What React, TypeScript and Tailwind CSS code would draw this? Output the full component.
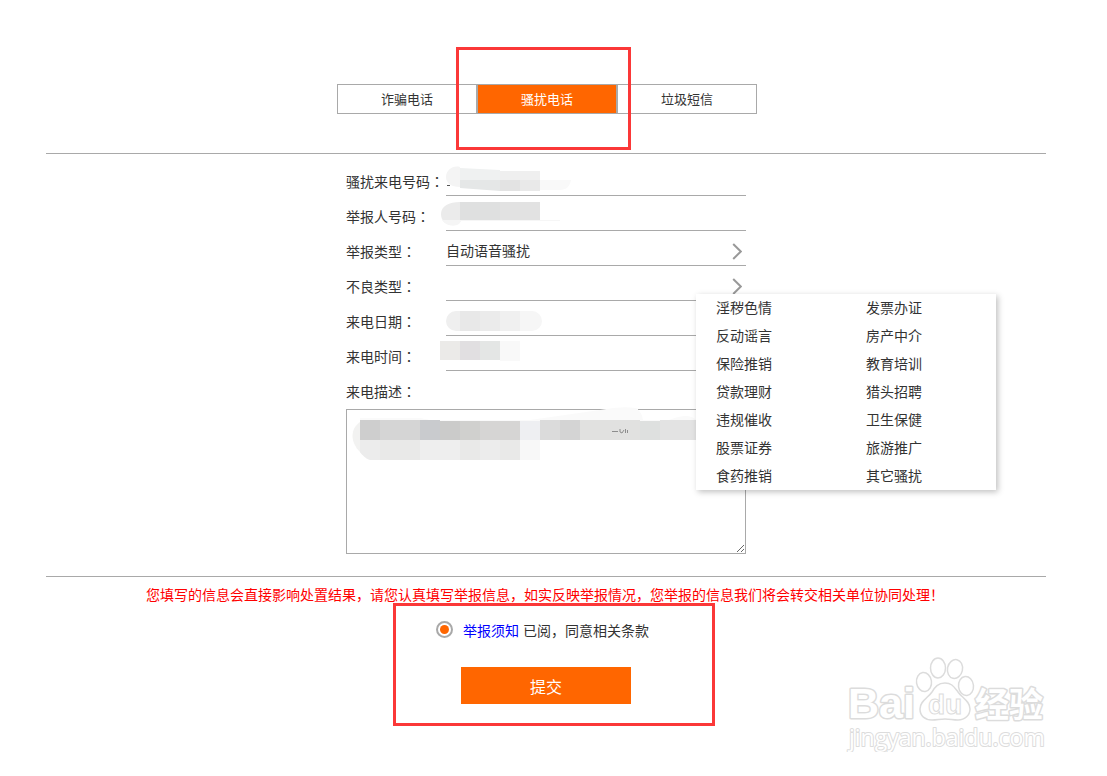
import { useState } from "react";
import clsx from "clsx";

const tabs = ["诈骗电话", "骚扰电话", "垃圾短信"];

const badTypes = [
  "淫秽色情", "发票办证",
  "反动谣言", "房产中介",
  "保险推销", "教育培训",
  "贷款理财", "猎头招聘",
  "违规催收", "卫生保健",
  "股票证券", "旅游推广",
  "食药推销", "其它骚扰",
];

function Label({ id, text }: { id: string; text: string }) {
  return (
    <label htmlFor={id} className="w-[100px] shrink-0 pt-1">
      {text}
      <span lang="ja" className="font-['Noto_Sans_CJK_JP',sans-serif]">：</span>
    </label>
  );
}

function TextRow({ id, label }: { id: string; label: string }) {
  return (
    <div className="flex h-[35px] items-center">
      <Label id={id} text={label} />
      <input
        id={id}
        type="text"
        className="h-full min-w-0 flex-1 border-b border-[#a9a9a9] outline-none"
      />
    </div>
  );
}

type SelectRowProps = {
  id: string;
  label: string;
  value: string;
  options: string[];
  onChange: (v: string) => void;
  children?: React.ReactNode;
};

function SelectRow({ id, label, value, options, onChange, children }: SelectRowProps) {
  return (
    <div className="flex h-[35px] items-center">
      <Label id={id} text={label} />
      <div className="relative h-full flex-1">
        <select
          id={id}
          value={value}
          onChange={(e) => onChange(e.target.value)}
          className="h-full w-full appearance-none border-b border-[#a9a9a9] bg-transparent pt-1 outline-none"
        >
          {options.map((o) => (
            <option key={o} value={o}>{o}</option>
          ))}
        </select>
        <svg
          className="pointer-events-none absolute top-3 right-1 h-[18px] w-[10px]"
          viewBox="0 0 10 18"
          fill="none"
          stroke="#999"
          strokeWidth="2"
          aria-hidden="true"
        >
          <path d="M1.200 1 8.800 8.500 1.200 16" />
        </svg>
        {children}
      </div>
    </div>
  );
}

// blurred-out private values
function Mosaic() {
  return (
    <svg
      className="pointer-events-none absolute top-0 -left-2 h-[300px] w-[360px]"
      viewBox="338 161 360 300"
      aria-hidden="true"
    >
      <path d="M447 185.500h3" stroke="#555" />
      <path d="M460 167c-7-2-14 3-14 10 0 6 5 10 14 10z" fill="#f4f4f4" />
      <path d="M460 168l40 2v10h-40z" fill="#eff1f1" />
      <path d="M460 180h40v11l-40-3z" fill="#e5e7e7" />
      <path d="M500 171h40v9h-40z" fill="#efefef" />
      <path d="M500 180h40v11h-40z" fill="#e3e3e3" />
      <path d="M520 180h20v11h-20z" fill="#e9e9e9" />
      <path d="M540 180h31c-1 6-4 10-12 10h-19z" fill="#f9f9f9" />

      <path d="M460 202c-11 0-19 4-19 12 0 7 5 11 11 11s8-3 8-5z" fill="#ebebeb" />
      <path d="M442 220h20l-3 4c-5 3-13 2-17-4z" fill="#f5f5f5" />
      <path d="M460 202h40v18h-40z" fill="#dfe0e0" />
      <path d="M500 202h40v18h-40z" fill="#e2e2e2" />
      <path d="M460 220h100v1h-100z" fill="#f6f6f6" />

      <path d="M460 311h-4a10 10 0 0 0 0 20h4z" fill="#efefef" />
      <path d="M460 311h20v20h-20z" fill="#e8e8e8" />
      <path d="M480 311h20v20h-20z" fill="#ebebeb" />
      <path d="M500 311h20v20h-20z" fill="#f0f0f0" />
      <path d="M520 311h12a10 10 0 0 1 0 20h-12z" fill="#f6f6f6" />

      <path d="M440 341h20v19h-20z" fill="#ebeae8" />
      <path d="M460 341h20v19h-20z" fill="#e1dfe1" />
      <path d="M480 341h20v19h-20z" fill="#e4e6e5" />
      <path d="M500 341h20v20h-20z" fill="#f9f9f9" />

      <path d="M360 418h60l10 2h100l70-10q20-4 36-2 6 4 7 12h26q20-8 27 0v6H360z" fill="#fafafa" />
      <path d="M360 422c-10 7-10 20 0 30l8 7h12v-37z" fill="#f2f2f1" />
      <path d="M360 440h20v20h-10c-4-1-8-5-10-8z" fill="#ececec" />
      <path d="M380 440h140v20H380z" fill="#e9e9e8" />
      <path d="M420 440h40v20h-40z" fill="#eeeeee" />
      <path d="M480 440h20v20h-20z" fill="#ececec" />
      <path d="M520 440h20v20h-20z" fill="#f8f8f8" />
      <path d="M360 420h20v20h-20z" fill="#cecece" />
      <path d="M380 420h40v20h-40z" fill="#d5d5d5" />
      <path d="M420 420h20v20h-20z" fill="#c9cbce" />
      <path d="M440 421h20v19h-20z" fill="#cbcbca" />
      <path d="M460 421h20v19h-20z" fill="#d0d0ce" />
      <path d="M480 421h40v19h-40z" fill="#d6d5d4" />
      <path d="M520 421h20v19h-20z" fill="#eeeff2" />
      <path d="M540 420h20v20h-20z" fill="#dbdbdb" />
      <path d="M560 420h20v20h-20z" fill="#d4d4d4" />
      <path d="M580 420h60v20h-60z" fill="#e1e1e0" />
      <path d="M640 421h20v19h-20z" fill="#dee0df" />
      <path d="M660 420h38v20h-38z" fill="#e3e3e3" />
      <path d="M612 431.500h6M620 429v3l2 1 2-3M625.500 429v4M627.500 430v3" stroke="#777" fill="none" strokeWidth="0.8" />
      <path d="M618 409.500h20" stroke="#fafafa" strokeWidth="2" />
    </svg>
  );
}

function Watermark() {
  return (
    <svg
      className="pointer-events-none absolute top-[77px] right-0 h-[100px] w-[200px]"
      viewBox="846 654 200 100"
      fill="#fff"
      stroke="#dcdcdc"
      strokeWidth="1.5"
      aria-hidden="true"
    >
      <g strokeLinejoin="round" paintOrder="stroke">
        <text x="848" y="718" fontSize="43" fontWeight="700" strokeWidth="3" className="font-['Liberation_Sans',sans-serif]">Bai</text>
        <text x="975" y="717" fontSize="34" fontWeight="700" strokeWidth="3" className="font-['Noto_Sans_CJK_SC',sans-serif]">经验</text>
        <text x="849" y="746" fontSize="23" fontWeight="400" strokeWidth="2" className="font-['Open_Sans',sans-serif]">jingyan.baidu.com</text>
      </g>
      <ellipse cx="924" cy="682" rx="7.500" ry="9.500" transform="rotate(-8 924 682)" />
      <ellipse cx="938" cy="668" rx="7.500" ry="10" />
      <ellipse cx="955" cy="669" rx="7.500" ry="9.500" transform="rotate(12 955 669)" />
      <ellipse cx="966" cy="686" rx="7.500" ry="9.500" transform="rotate(-6 966 686)" />
      <path d="M945 683c-7 0-10 4-13 9-4 6-12 9-12 17 0 7 5 11 12 11 5 0 8-1 13-1s8 1 13 1c7 0 12-5 12-11 0-8-8-11-12-17-4-5-6-9-13-9z" />
      <text x="928" y="714" fontSize="28" fontWeight="700" strokeWidth="1" className="font-['Liberation_Sans',sans-serif]">du</text>
    </svg>
  );
}

export default function App() {
  const [tab, setTab] = useState(1);
  const [reportType, setReportType] = useState("自动语音骚扰");
  const [badType, setBadType] = useState("");
  const [agreed, setAgreed] = useState(true);

  return (
    <div className="bg-white pr-[61px] pb-12 pl-[46px] font-['Noto_Sans_CJK_SC',sans-serif] text-sm text-[#333]" lang="zh-CN">
      <main className="mx-auto max-w-[1000px]">
        <div className="flex justify-center border-b border-[#a9a9a9] pt-[84px] pb-[39px] pl-0.5">
          <nav className="relative flex w-[420px]">
            {tabs.map((t, i) => (
              <button
                key={t}
                type="button"
                onClick={() => setTab(i)}
                className={clsx(
                  "h-[30px] flex-1 border border-[#a9a9a9] text-[13px]",
                  tab === i && "bg-[#ff6600] text-white"
                )}
              >
                {t}
              </button>
            ))}
            <div className="pointer-events-none absolute -top-[37px] left-[119px] h-[103px] w-[175px] border-3 border-[#fb3838]" />
          </nav>
        </div>

        <form onSubmit={(e) => e.preventDefault()}>
          <div className="border-b border-[#a9a9a9] pt-[7px] pb-[22px]">
            <div className="relative mx-auto max-w-[400px]">
              <TextRow id="caller" label="骚扰来电号码" />
              <TextRow id="reporter" label="举报人号码" />
              <SelectRow
                id="report-type"
                label="举报类型"
                value={reportType}
                options={["自动语音骚扰", "人工骚扰"]}
                onChange={setReportType}
              />
              <SelectRow
                id="bad-type"
                label="不良类型"
                value={badType}
                options={["", ...badTypes]}
                onChange={setBadType}
              >
                <ul className="absolute top-7 left-[250px] z-10 grid w-[300px] grid-cols-2 bg-white shadow-[2px_2px_6px_rgba(0,0,0,0.25)]">
                  {badTypes.map((t) => (
                    <li key={t} className="h-7 pl-5">
                      <button type="button" className="h-full pb-0.5" onClick={() => setBadType(t)}>
                        {t}
                      </button>
                    </li>
                  ))}
                </ul>
              </SelectRow>
              <TextRow id="date" label="来电日期" />
              <TextRow id="time" label="来电时间" />
              <div className="flex h-[35px] items-center">
                <Label id="desc" text="来电描述" />
              </div>
              <textarea
                id="desc"
                className="mt-[3px] block h-[145px] w-full border border-[#a9a9a9] p-2 outline-none"
              />
              <Mosaic />
            </div>
          </div>

          <div className="relative">
            <p className="px-[100px] leading-[35px] whitespace-nowrap text-[#ff0000]">
              您填写的信息会直接影响处置结果，请您认真填写举报信息，如实反映举报情况，您举报的信息我们将会转交相关单位协同处理！
            </p>
            <div className="relative mx-auto max-w-[400px]">
              <div className="flex h-[35px] items-center pl-[90px]">
                <input
                  id="agree"
                  type="radio"
                  checked={agreed}
                  onChange={() => setAgreed(true)}
                  className="mr-[10px] size-[17px] appearance-none rounded-full border-2 border-[#a9a9a9] bg-clip-content p-[2px] checked:bg-[#ff6600]"
                />
                <a href="#notice" className="mr-1 text-[#0000ff]">举报须知</a>
                <label htmlFor="agree">已阅，同意相关条款</label>
              </div>
              <button type="submit" className="mx-auto mt-5 block h-[37px] w-[170px] bg-[#ff6600] text-base text-white">
                提交
              </button>
              <div className="pointer-events-none absolute -top-[9px] left-[47px] h-[123px] w-[322px] border-3 border-[#fb3838]" />
            </div>
            <Watermark />
          </div>
        </form>
      </main>
    </div>
  );
}
